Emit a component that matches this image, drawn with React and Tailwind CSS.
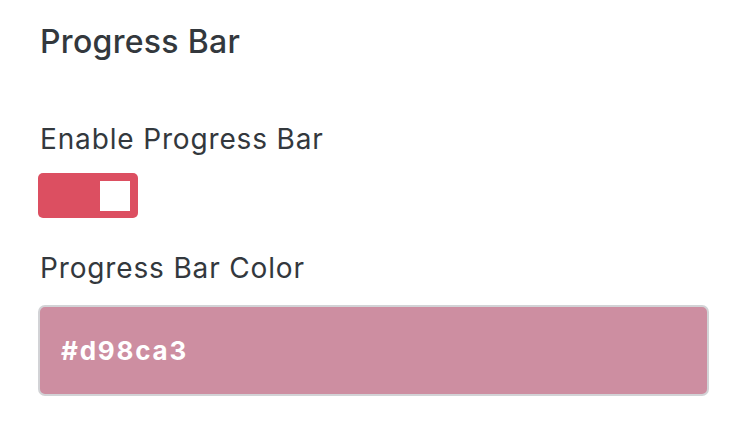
import React from 'react';

export default function App() {
  return (
    <div className="min-h-screen bg-white text-[#33383d] px-[38px] pt-[22px] font-['Inter',sans-serif]">
      <h2 className="text-[32px] leading-[40px] font-medium tracking-[0.3px] pl-[2px]">Progress Bar</h2>

      <label className="block mt-[59px] text-[28px] leading-[36px] tracking-[0.85px] pl-[2px]">Enable Progress Bar</label>
      <button
        type="button"
        className="mt-[16px] flex items-center justify-end w-[100px] h-[45px] rounded-[5px] bg-[#dc4f61] pr-[8px]"
      >
        <span className="block w-[30px] h-[30px] bg-white" />
      </button>

      <label className="block mt-[32px] text-[28px] leading-[36px] tracking-[0.85px] pl-[2px]">Progress Bar Color</label>
      <div className="mt-[19px] w-[671px] h-[91px] flex items-center rounded-[7px] border-2 border-[#d2d3d6] bg-[#cd8ea1] pl-[21px]">
        <span className="text-white text-[26px] font-bold tracking-[1.8px]">#d98ca3</span>
      </div>
    </div>
  );
}
